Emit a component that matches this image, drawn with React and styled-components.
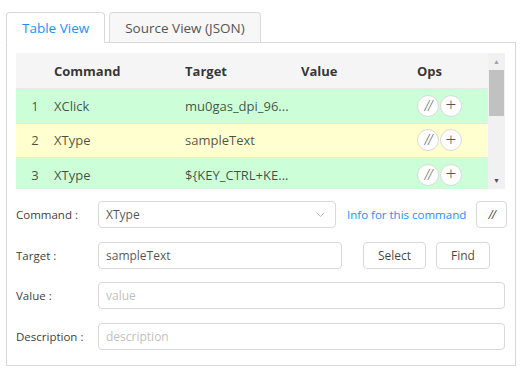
import React from 'react'
import styled, { createGlobalStyle } from 'styled-components'

const GlobalStyle = createGlobalStyle`
  body {
    margin: 0;
    background: #fff;
    font-family: 'Open Sans', 'Noto Sans', sans-serif;
    color: rgba(0, 0, 0, 0.75);
  }
`

const Page = styled.div`
  padding: 12px 8px 0 6px;
  width: 524px;
  box-sizing: border-box;
`

const TabBar = styled.div`
  display: flex;
  gap: 4px;
  height: 31px;
  border-bottom: 1px solid #d9d9d9;
  box-sizing: border-box;
`

const Tab = styled.div`
  height: ${({ active }) => (active ? '31px' : '30px')};
  box-sizing: border-box;
  padding: 0 15px;
  display: flex;
  align-items: center;
  font-size: 13.5px;
  color: ${({ active }) => (active ? '#1890ff' : '#555')};
  background: ${({ active }) => (active ? '#fff' : '#f7f7f7')};
  border: 1px solid #d9d9d9;
  border-bottom: ${({ active }) => (active ? '1px solid #fff' : 'none')};
  border-radius: 4px 4px 0 0;
  margin-bottom: -1px;
  z-index: 1;
`

const Panel = styled.div`
  border: 1px solid #d9d9d9;
  border-top: none;
  padding: 10px 10px 16px 9px;
  height: 323px;
  box-sizing: border-box;
`

const TableWrap = styled.div`
  display: flex;
  height: 136px;
  overflow: hidden;
`

const Table = styled.div`
  flex: 1;
  font-size: 13px;
`

const Row = styled.div`
  display: grid;
  grid-template-columns: 38px 131px 116px 116px 1fr;
  align-items: center;
  height: ${({ head }) => (head ? '36px' : '34.5px')};
  background: ${({ bg }) => bg};
  border-bottom: 1px solid #e8e8e8;
  box-sizing: border-box;
  font-weight: ${({ head }) => (head ? 700 : 400)};
  color: ${({ head }) => (head ? 'rgba(0,0,0,0.8)' : 'rgba(0,0,0,0.7)')};
`

const Cell = styled.div`
  white-space: nowrap;
  overflow: hidden;
  text-align: ${({ center }) => (center ? 'center' : 'left')};
`

const Ops = styled.div`
  display: flex;
  gap: 1px;
`

const RoundBtn = styled.div`
  width: 22px;
  height: 22px;
  border-radius: 50%;
  border: 1px solid #d9d9d9;
  background: #fff;
  box-sizing: border-box;
  display: flex;
  align-items: center;
  justify-content: center;
  font-size: ${({ italic }) => (italic ? '14px' : '19px')};
  font-weight: 300;
  color: #555;
  font-style: ${({ italic }) => (italic ? 'italic' : 'normal')};
  letter-spacing: ${({ italic }) => (italic ? '-1px' : '0')};
  line-height: 1;
  padding-bottom: ${({ italic }) => (italic ? '0' : '2px')};
`

const Scrollbar = styled.div`
  width: 17px;
  background: #f1f1f1;
  display: flex;
  flex-direction: column;
  align-items: center;
`

const Arrow = styled.div`
  height: 17px;
  display: flex;
  align-items: center;
  justify-content: center;
  color: ${({ dim }) => (dim ? '#a3a3a3' : '#505050')};
  font-size: 7px;
`

const Thumb = styled.div`
  width: 15px;
  height: 46px;
  background: #c1c1c1;
`

const Spacer = styled.div`
  flex: 1;
`

const Form = styled.div`
  display: flex;
  flex-direction: column;
  gap: 13.5px;
  margin-top: 12px;
`

const FormRow = styled.div`
  display: flex;
  align-items: center;
  gap: 10px;
`

const Label = styled.div`
  width: 72px;
  flex-shrink: 0;
  font-size: 11.5px;
  color: rgba(0, 0, 0, 0.8);
  white-space: nowrap;
`

const Input = styled.div`
  flex: ${({ w }) => (w ? 'none' : '1')};
  width: ${({ w }) => (w ? `${w}px` : 'auto')};
  height: 27px;
  border: 1px solid #d9d9d9;
  border-radius: 4px;
  box-sizing: border-box;
  display: flex;
  align-items: center;
  justify-content: space-between;
  padding: 0 10px 0 7px;
  font-size: 12px;
  color: ${({ $ph }) => ($ph ? '#bfbfbf' : 'rgba(0,0,0,0.7)')};
`

const Link = styled.span`
  color: #1890ff;
  font-size: 11.5px;
  margin-left: 1px;
  white-space: nowrap;
`

const Button = styled.div`
  height: 27px;
  width: ${({ w }) => w}px;
  flex-shrink: 0;
  margin-left: ${({ ml }) => ml || '0'};
  border: 1px solid #d9d9d9;
  border-radius: 4px;
  box-sizing: border-box;
  display: flex;
  align-items: center;
  justify-content: center;
  font-size: 12px;
  color: rgba(0, 0, 0, 0.75);
  font-style: ${({ italic }) => (italic ? 'italic' : 'normal')};
  letter-spacing: ${({ italic }) => (italic ? '-1px' : '0')};
`

const rows = [
  { n: 1, cmd: 'XClick', target: 'mu0gas_dpi_96...', bg: '#ccffd8' },
  { n: 2, cmd: 'XType', target: 'sampleText', bg: '#ffffcf' },
  { n: 3, cmd: 'XType', target: '${KEY_CTRL+KE...', bg: '#ccffd8' },
]

const Chevron = () => (
  <svg width="9" height="6" viewBox="0 0 9 6">
    <path d="M1 1 L4.5 4.5 L8 1" fill="none" stroke="#bbb" strokeWidth="1" />
  </svg>
)

export default function App() {
  return (
    <Page>
      <GlobalStyle />
      <TabBar>
        <Tab active>Table View</Tab>
        <Tab>Source View (JSON)</Tab>
      </TabBar>
      <Panel>
        <TableWrap>
          <Table>
            <Row head bg="#f5f5f5">
              <Cell />
              <Cell>Command</Cell>
              <Cell>Target</Cell>
              <Cell>Value</Cell>
              <Cell>Ops</Cell>
            </Row>
            {rows.map((r) => (
              <Row key={r.n} bg={r.bg}>
                <Cell center>{r.n}</Cell>
                <Cell>{r.cmd}</Cell>
                <Cell>{r.target}</Cell>
                <Cell />
                <Ops>
                  <RoundBtn italic>//</RoundBtn>
                  <RoundBtn>+</RoundBtn>
                </Ops>
              </Row>
            ))}
          </Table>
          <Scrollbar>
            <Arrow dim>▲</Arrow>
            <Thumb />
            <Spacer />
            <Arrow>▼</Arrow>
          </Scrollbar>
        </TableWrap>
        <Form>
          <FormRow>
            <Label>Command :</Label>
            <Input w={238}>
              XType
              <Chevron />
            </Input>
            <Link>Info for this command</Link>
            <Button w={31} italic ml="auto">//</Button>
          </FormRow>
          <FormRow>
            <Label>Target :</Label>
            <Input w={244}>sampleText</Input>
            <Button w={63} ml="11px">Select</Button>
            <Button w={54}>Find</Button>
          </FormRow>
          <FormRow>
            <Label>Value :</Label>
            <Input $ph>value</Input>
          </FormRow>
          <FormRow>
            <Label>Description :</Label>
            <Input $ph>description</Input>
          </FormRow>
        </Form>
      </Panel>
    </Page>
  )
}
